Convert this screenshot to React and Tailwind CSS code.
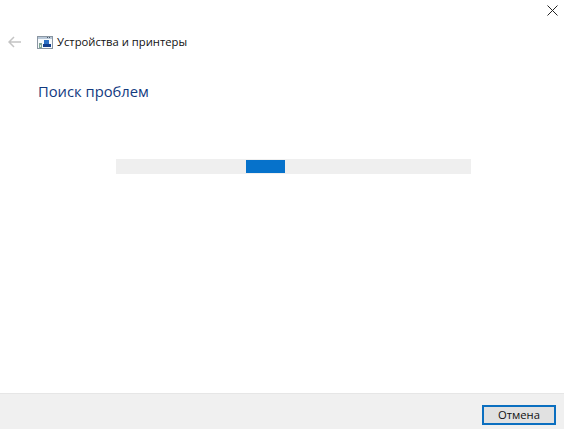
import React from 'react';

const DeviceIcon = () => (
  <svg width="16" height="13" viewBox="0 0 16 13" shapeRendering="crispEdges">
    <rect x="0.5" y="0.5" width="15" height="12" fill="#f7fafc" stroke="#8a96a2" />
    <rect x="1" y="1" width="14" height="2" fill="#b9c8d8" />
    <rect x="10" y="1" width="1" height="1" fill="#4a5a6a" />
    <rect x="12" y="1" width="1" height="1" fill="#4a5a6a" />
    <rect x="7" y="4" width="5" height="4" fill="#2a6fc4" />
    <rect x="6" y="8" width="8" height="3" fill="#123f8c" />
    <rect x="2" y="7" width="3" height="5" fill="#7fa596" />
    <rect x="3" y="9" width="1" height="2" fill="#e2ece6" />
  </svg>
);

export default function App() {
  return (
    <div className="w-[564px] h-[429px] bg-white flex flex-col overflow-hidden font-['Open_Sans','Noto_Sans',sans-serif]">
      {/* close button */}
      <div className="h-[22px] flex justify-end items-start pt-[5px] pr-[6px]">
        <svg width="11" height="11" viewBox="0 0 11 11" className="text-[#222]">
          <path d="M0.5 0.5 L10.5 10.5 M10.5 0.5 L0.5 10.5" stroke="currentColor" strokeWidth="1" fill="none" />
        </svg>
      </div>

      {/* nav row */}
      <div className="h-[20px] mt-[10px] flex items-center pl-[8px]">
        <svg width="13" height="12" viewBox="0 0 13 12" className="text-[#c4c4c4]">
          <path d="M6 1 L1 6 L6 11 M1 6 H13" stroke="currentColor" strokeWidth="1.5" fill="none" />
        </svg>
        <div className="ml-[16px] flex items-center">
          <DeviceIcon />
        </div>
        <span className="ml-[4px] text-[11.25px] leading-none text-[#111] whitespace-nowrap">
          Устройства и принтеры
        </span>
      </div>

      {/* heading */}
      <h1 className="mt-[28px] ml-[38px] text-[14.75px] leading-[22px] font-normal text-[#123a7f] whitespace-nowrap">
        Поиск проблем
      </h1>

      {/* progress bar */}
      <div className="mt-[57px] ml-[116px] w-[355px] h-[15px] bg-[#efefef] py-px pl-[130px]">
        <div className="w-[39px] h-[13px] bg-[#0672cb]" />
      </div>

      <div className="flex-1" />

      {/* footer */}
      <div className="h-[36px] bg-[#f0f0f0] border-t border-[#e6e6e6] flex justify-end items-start pt-[11px] pr-[8px]">
        <button className="w-[74px] h-[20px] bg-[#e1e1e1] border-2 border-[#0b6fc0] text-[11.25px] leading-none text-[#111] flex items-center justify-center">
          Отмена
        </button>
      </div>
    </div>
  );
}
